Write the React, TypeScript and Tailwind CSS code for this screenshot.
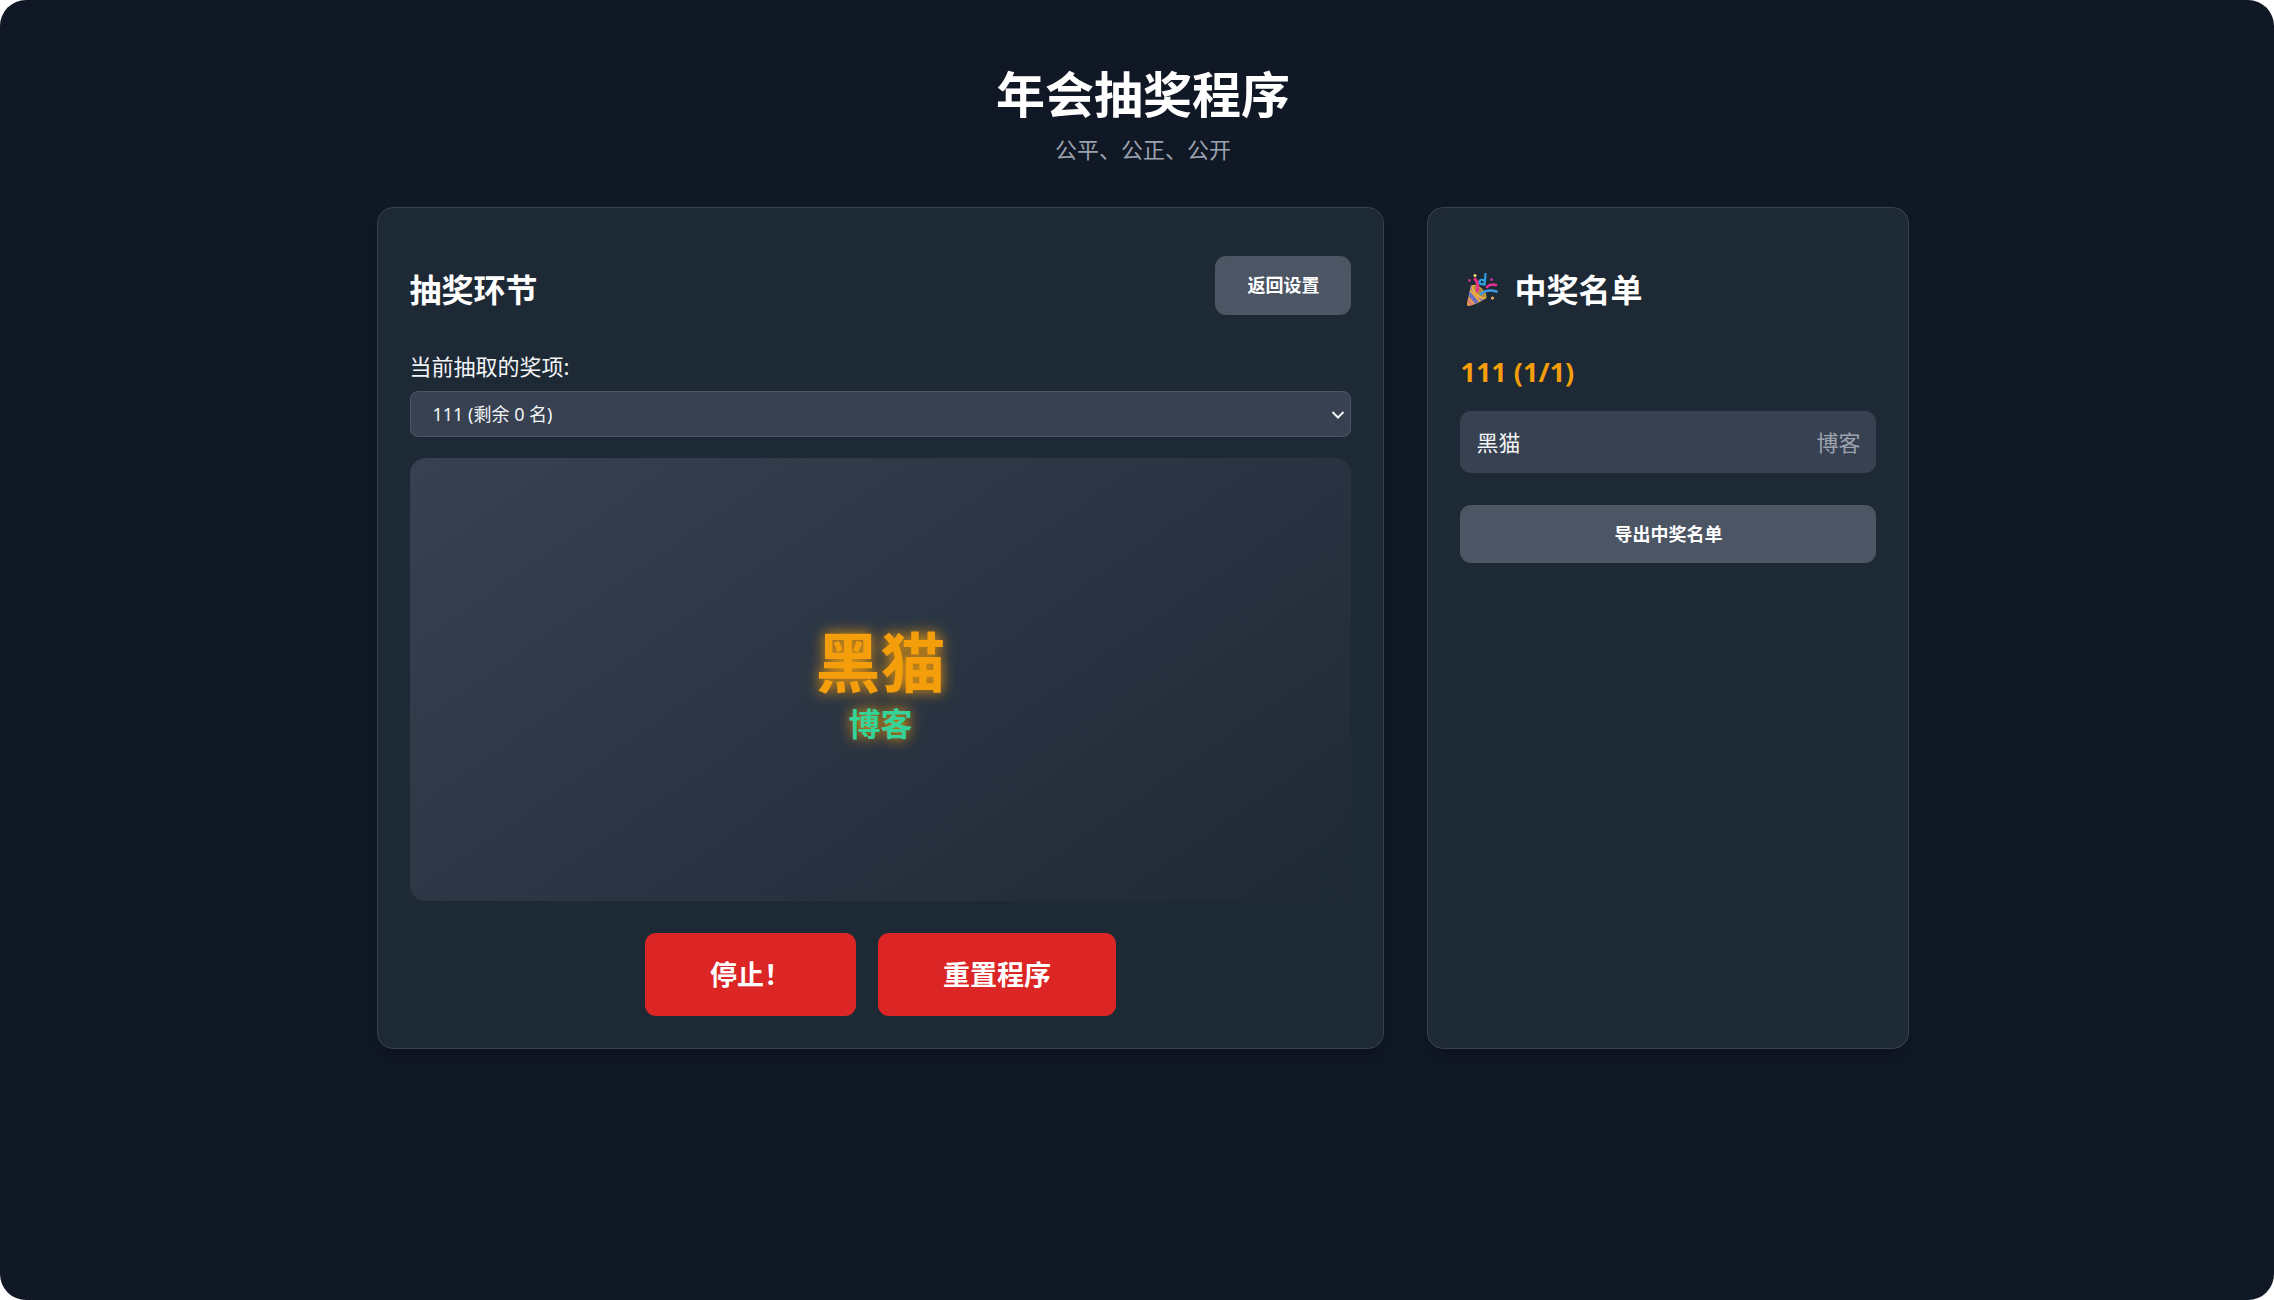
import React, { useState } from "react";

const prizes = [{ id: "p1", name: "111", total: 1, left: 0 }];

const winners = [{ name: "黑猫", dept: "博客", prizeId: "p1" }];

function PartyPopper() {
  return (
    <svg viewBox="0 0 32 34" className="w-8 h-[34px] shrink-0" aria-hidden="true">
      <path d="M5 12 L20 25 Q12 31 2.500 33 Q1 33 1 31 Z" fill="#f2a93b" />
      <path d="M3.500 18 L13 29 L9 31 L2.500 23 Z" fill="#6a6fc4" />
      <path d="M5 12 L7 13 L18 26.500 L15 28 L4.500 16 Z" fill="#7d74c0" />
      <path d="M2 25 L8 31.500 L4 32.800 L1.500 29 Z" fill="#dd7f78" />
      <ellipse cx="13" cy="19" rx="4.500" ry="9.500" transform="rotate(-46 13 19)" fill="#f0b03c" />
      <ellipse cx="13.500" cy="18.500" rx="3" ry="8" transform="rotate(-46 13.500 18.500)" fill="#a98a45" />
      <path d="M9 6 Q13.500 11 11 18" fill="none" stroke="#ee2f86" strokeWidth="3" strokeLinecap="round" />
      <path d="M15 21 Q21 15.500 30.500 18.500" fill="none" stroke="#3b9be6" strokeWidth="2.600" strokeLinecap="round" />
      <path d="M21 14 Q24 10.500 30 12" fill="none" stroke="#e92f97" strokeWidth="2.600" strokeLinecap="round" />
      <path
        d="M19.500 1 L18.500 12 M18.500 7.500 Q14 5.500 13.500 9 Q14 12.500 18 10.500"
        fill="none"
        stroke="#2f9fe0"
        strokeWidth="2.200"
        strokeLinecap="round"
      />
      <circle cx="9" cy="2.500" r="1.500" fill="#f5e06a" />
      <circle cx="3.500" cy="7.500" r="1.400" fill="#c72f8c" />
      <circle cx="25.500" cy="6.500" r="1.500" fill="#b8379a" />
      <circle cx="26.500" cy="25" r="1.600" fill="#f0a765" />
    </svg>
  );
}

function App() {
  const [prizeId, setPrizeId] = useState("p1");

  return (
    <div className="min-h-screen bg-white font-['Noto_Sans','Noto_Sans_CJK_SC',sans-serif]">
      <div className="min-h-screen rounded-[26px] bg-[#101725] pt-16 pl-3 text-[22px] leading-8 text-gray-100">
        <header className="text-center">
          <h1 className="text-[49px] leading-[60px] font-bold text-white">年会抽奖程序</h1>
          <p className="mt-[9px] text-[#9ca3af]">公平、公正、公开</p>
        </header>

        <main className="mx-auto mt-[42px] grid max-w-[1533px] grid-cols-[23fr_11fr] gap-[43px]">
          <section className="rounded-2xl border border-[#374151] bg-[#1e2936] p-8 shadow-lg">
            <div className="mt-4 flex items-center justify-between">
              <h2 className="mt-2 text-[32px] leading-[48px] font-bold text-white">抽奖环节</h2>
              <button className="rounded-[11px] bg-[#4b5563] px-8 py-4 text-[18px] leading-[27px] font-bold text-white">
                返回设置
              </button>
            </div>

            <label htmlFor="prize" className="mt-[35px] block">
              当前抽取的奖项:
            </label>
            <div className="relative mt-[9px]">
              <select
                id="prize"
                value={prizeId}
                onChange={(e) => setPrizeId(e.target.value)}
                className="block h-[46px] w-full appearance-none rounded-lg border border-[#4b5563] bg-[#374151] px-[22px] text-[18px] text-gray-100"
              >
                {prizes.map((p) => (
                  <option key={p.id} value={p.id}>
                    {p.name} (剩余 {p.left} 名)
                  </option>
                ))}
              </select>
              <svg viewBox="0 0 14 8" className="pointer-events-none absolute top-5 right-[6px] h-2 w-[14px]">
                <path d="M1.500 1 L7 6.500 L12.500 1" fill="none" stroke="#f3f4f6" strokeWidth="2" />
              </svg>
            </div>

            <div className="mt-[21px] flex h-[443px] flex-col items-center justify-center rounded-2xl bg-linear-145 from-[#374151] to-[#1e2936] pt-[11px] text-center font-bold text-[#f59e0b] [text-shadow:0_0_14px_#f59e0b]">
              <div className="text-[65px] leading-[78px]">黑猫</div>
              <div className="text-[32px] leading-[46px] text-[#34d399]">博客</div>
            </div>

            <div className="mt-8 flex justify-center gap-[22px]">
              <button className="rounded-[11px] bg-[#dc2626] px-[65px] py-[22px] text-[27px] leading-[39px] font-bold text-white">
                停止！
              </button>
              <button className="rounded-[11px] bg-[#dc2626] px-[65px] py-[22px] text-[27px] leading-[39px] font-bold text-white">
                重置程序
              </button>
            </div>
          </section>

          <aside className="rounded-2xl border border-[#374151] bg-[#1e2936] p-8 shadow-lg">
            <h2 className="mt-[26px] flex items-center gap-4 pl-[6px] text-[32px] leading-[48px] font-bold text-white">
              <PartyPopper />
              中奖名单
            </h2>
            {prizes.map((p) => {
              const list = winners.filter((w) => w.prizeId === p.id);
              return (
                <div key={p.id}>
                  <h3 className="mt-[38px] text-[27px] leading-10 font-bold text-[#f59e0b]">
                    {p.name} ({list.length}/{p.total})
                  </h3>
                  <ul className="mt-[19px]">
                    {list.map((w) => (
                      <li key={w.name} className="flex justify-between rounded-[11px] bg-[#374151] px-4 py-[15px]">
                        <span>{w.name}</span>
                        <span className="text-[#9ca3af]">{w.dept}</span>
                      </li>
                    ))}
                  </ul>
                </div>
              );
            })}
            <button className="mt-8 w-full rounded-[11px] bg-[#4b5563] py-4 text-[18px] leading-[26px] font-bold text-white">
              导出中奖名单
            </button>
          </aside>
        </main>
      </div>
    </div>
  );
}

export default App;
